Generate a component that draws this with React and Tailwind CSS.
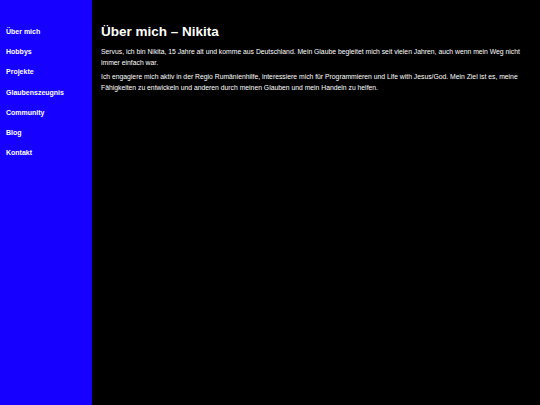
import React from 'react';

const links = ['Über mich', 'Hobbys', 'Projekte', 'Glaubenszeugnis', 'Community', 'Blog', 'Kontakt'];

const App = () => {
  return (
    <div className="flex min-h-screen bg-black font-['Liberation_Sans',Arial,sans-serif]">
      {/* Sidebar */}
      <nav className="w-[92px] shrink-0 bg-[#1600ff] pt-[27px] px-[6px]">
        <ul className="flex flex-col gap-[10.2px]">
          {links.map((l) => (
            <li key={l}>
              <a href="#" className="block text-[7px] leading-[10px] font-bold text-white">
                {l}
              </a>
            </li>
          ))}
        </ul>
      </nav>

      {/* Main */}
      <main className="flex-1 pl-[9px] pr-[12px] pt-[24px] text-white">
        <h1 className="text-[13.5px] leading-[16px] font-bold mb-[6px]">Über mich – Nikita</h1>
        <p className="text-[6.8px] leading-[11px] mb-[3px]">
          Servus, ich bin Nikita, 15 Jahre alt und komme aus Deutschland. Mein Glaube begleitet mich seit vielen Jahren, auch wenn mein Weg nicht immer einfach war.
        </p>
        <p className="text-[6.8px] leading-[11px]">
          Ich engagiere mich aktiv in der Regio Rumänienhilfe, interessiere mich für Programmieren und Life with Jesus/God. Mein Ziel ist es, meine Fähigkeiten zu entwickeln und anderen durch meinen Glauben und mein Handeln zu helfen.
        </p>
      </main>
    </div>
  );
};

export default App;
